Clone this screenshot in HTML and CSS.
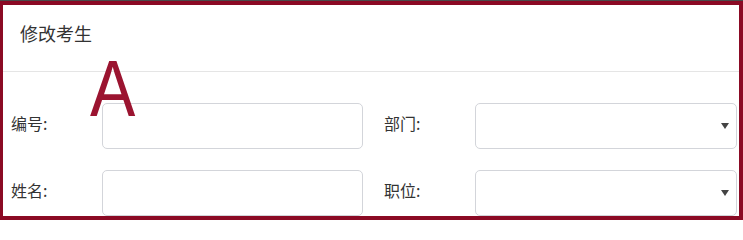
FILE: index.html
```html
<!DOCTYPE html>
<html lang="zh">
<head>
<meta charset="utf-8">
<title>修改考生</title>
<link rel="stylesheet" href="styles.css">
</head>
<body>
<div class="topline"></div>
<div class="frame">
  <div class="modal-header">修改考生</div>
  <div class="modal-body">
    <div class="field">
      <label class="label">编号:</label>
      <input class="control" type="text">
    </div>
    <div class="field">
      <label class="label">部门:</label>
      <div class="select-wrap">
        <select class="control select"><option></option></select>
        <svg class="caret" width="8" height="6" viewBox="0 0 8 6"><path d="M0 0H8L4 6Z" fill="#444"/></svg>
      </div>
    </div>
    <div class="field">
      <label class="label">姓名:</label>
      <input class="control" type="text">
    </div>
    <div class="field">
      <label class="label">职位:</label>
      <div class="select-wrap">
        <select class="control select"><option></option></select>
        <svg class="caret" width="8" height="6" viewBox="0 0 8 6"><path d="M0 0H8L4 6Z" fill="#444"/></svg>
      </div>
    </div>
  </div>
  <span class="tag">A</span>
</div>
</body>
</html>
```

FILE: styles.css
```css
html, body {
  margin: 0;
  padding: 0;
  background: #fff;
}
body {
  width: 743px;
  height: 223px;
  overflow: hidden;
  font-family: "Noto Sans CJK SC", "Liberation Sans", sans-serif;
  color: #333;
}
.topline {
  height: 1px;
  background: #4a4a4a;
}
.frame {
  position: relative;
  box-sizing: border-box;
  height: 219px;
  border: 4px solid #8b0a24;
  border-left-width: 3px;
  overflow: hidden;
}
.modal-header {
  padding: 16px 17px 26px;
  font-size: 18px;
  line-height: 24px;
  border-bottom: 1px solid #e5e5e5;
}
.modal-body {
  padding: 31px 2px 0 8px;
  display: grid;
  grid-template-columns: 352px 353px;
  column-gap: 21px;
  row-gap: 21px;
}
.field {
  display: flex;
  align-items: center;
}
.label {
  width: 91px;
  flex: none;
  font-size: 16px;
  line-height: 22px;
  margin-top: -6px;
}
.control {
  box-sizing: border-box;
  flex: 1;
  min-width: 0;
  height: 46px;
  border: 1px solid #d3d5da;
  border-radius: 5px;
  background: #fff;
  margin: 0;
  padding: 0 10px;
  font: inherit;
  outline: none;
}
.select-wrap {
  position: relative;
  flex: 1;
  display: flex;
}
.select {
  appearance: none;
  -webkit-appearance: none;
  width: 100%;
}
.caret {
  position: absolute;
  right: 8px;
  top: 20px;
}
.tag {
  position: absolute;
  left: 87px;
  top: 44px;
  font-family: "Liberation Sans", sans-serif;
  font-size: 79px;
  line-height: 1;
  color: #9b1430;
  transform: scaleX(0.86);
  transform-origin: left top;
}
```
